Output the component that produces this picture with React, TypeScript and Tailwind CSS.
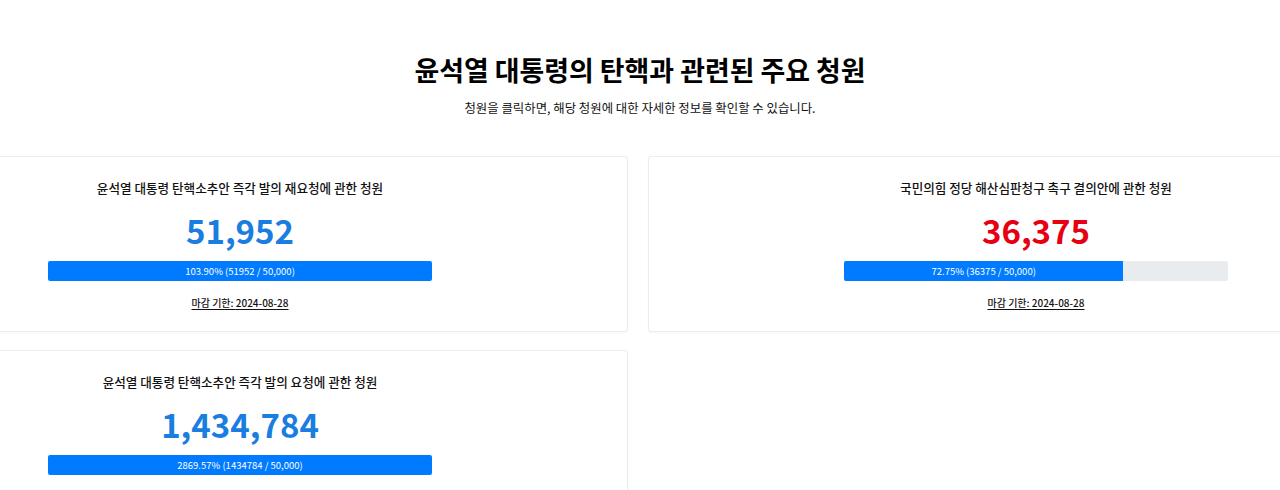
import React from 'react';

type Petition = {
  title: string;
  count: number;
  goal: number;
  deadline?: string;
  color: string;
};

const petitions: Petition[] = [
  {
    title: '윤석열 대통령 탄핵소추안 즉각 발의 재요청에 관한 청원',
    count: 51952,
    goal: 50000,
    deadline: '2024-08-28',
    color: 'text-[#1a7de0]',
  },
  {
    title: '국민의힘 정당 해산심판청구 촉구 결의안에 관한 청원',
    count: 36375,
    goal: 50000,
    deadline: '2024-08-28',
    color: 'text-[#e60012]',
  },
  {
    title: '윤석열 대통령 탄핵소추안 즉각 발의 요청에 관한 청원',
    count: 1434784,
    goal: 50000,
    deadline: '2024-07-20',
    color: 'text-[#1a7de0]',
  },
];

const PetitionCard: React.FC<{ petition: Petition }> = ({ petition }) => {
  const percent = (petition.count / petition.goal) * 100;
  return (
    <div className="rounded-[3px] border border-[#ececec] bg-white pt-[21px] pb-[20px] shadow-[0_1px_2px_rgba(0,0,0,0.03)]">
      <div className="flex flex-col items-center">
        <h2 className="text-[12.6px] leading-[20px] font-medium text-[#111]">{petition.title}</h2>
        <p className={`mt-[12px] text-[33px] leading-[40px] font-bold ${petition.color}`}>
          {petition.count.toLocaleString('en-US')}
        </p>
        <div className="mt-[11px] h-5 w-96 overflow-hidden rounded-[2px] bg-[#e9ecef]">
          <div
            className="flex h-full items-center justify-center bg-[#007bff] text-[9.5px] whitespace-nowrap text-white"
            style={{ width: `${Math.min(percent, 100)}%` }}
          >
            {percent.toFixed(2)}% ({petition.count} / {petition.goal.toLocaleString('en-US')})
          </div>
        </div>
        <p className="mt-[14px] text-[10px] leading-[16px] font-medium text-[#111] underline underline-offset-2">
          마감 기한: {petition.deadline}
        </p>
      </div>
    </div>
  );
};

export default function App() {
  return (
    <div className="min-h-screen overflow-hidden bg-white font-['Noto_Sans_CJK_KR',sans-serif] text-black">
      <header className="pt-[51px] text-center">
        <h1 className="text-[26.9px] leading-[38px] font-bold">윤석열 대통령의 탄핵과 관련된 주요 청원</h1>
        <p className="mt-[11px] text-[12.4px] leading-[16px] text-[#111]">
          청원을 클릭하면, 해당 청원에 대한 자세한 정보를 확인할 수 있습니다.
        </p>
      </header>
      <div className="mt-[40px]">
        <div className="ml-[-148px] grid w-[1572px] grid-cols-2 gap-x-5 gap-y-[18px]">
          {petitions.map((p) => (
            <PetitionCard key={p.title} petition={p} />
          ))}
        </div>
      </div>
    </div>
  );
}
